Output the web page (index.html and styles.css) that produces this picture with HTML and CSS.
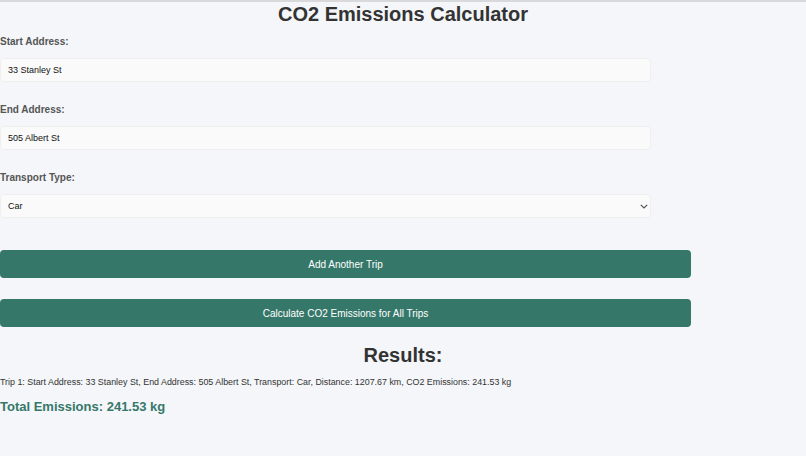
FILE: index.html
```html
<!DOCTYPE html>
<html>
<head>
<meta charset="utf-8">
<link rel="stylesheet" href="styles.css">
</head>
<body>
<h1 class="title">CO2 Emissions Calculator</h1>
<form class="form">
  <label class="label label-first">Start Address:</label>
  <input class="field" type="text" value="33 Stanley St">
  <label class="label">End Address:</label>
  <input class="field" type="text" value="505 Albert St">
  <label class="label">Transport Type:</label>
  <div class="select-wrap">
    <select class="field select">
      <option>Car</option>
    </select>
    <svg class="chevron" width="8" height="5" viewBox="0 0 8 5"><path d="M0.8 0.8 L4 4 L7.2 0.8" fill="none" stroke="#555" stroke-width="1.2"/></svg>
  </div>
  <button type="button" class="btn btn-first">Add Another Trip</button>
  <button type="button" class="btn btn-second">Calculate CO2 Emissions for All Trips</button>
</form>
<h2 class="results-title">Results:</h2>
<p class="trip">Trip 1: Start Address: 33 Stanley St, End Address: 505 Albert St, Transport: Car, Distance: 1207.67 km, CO2 Emissions: 241.53 kg</p>
<p class="total">Total Emissions: 241.53 kg</p>
</body>
</html>
```
FILE: styles.css
```css
html, body {
  margin: 0;
  padding: 0;
}
body {
  background: #f4f6f9;
  border-top: 2px solid #d9d9db;
  font-family: "Liberation Sans", Arial, sans-serif;
  color: #333;
  height: 454px;
  overflow: hidden;
}
.title {
  margin: 0;
  font-size: 20px;
  line-height: 24px;
  font-weight: bold;
  text-align: center;
  color: #333;
}
.form {
  display: flex;
  flex-direction: column;
  align-items: flex-start;
  margin: 0;
}
.label {
  display: block;
  font-size: 10px;
  line-height: 12px;
  font-weight: bold;
  color: #555;
  margin-top: 22px;
}
.label-first {
  margin-top: 10px;
}
.field {
  box-sizing: border-box;
  width: 651px;
  height: 24px;
  margin: 10px 0 0 0;
  padding: 0 0 0 7px;
  border: 1px solid #efefef;
  border-radius: 4px;
  background: #fafafa;
  font-family: "Liberation Sans", Arial, sans-serif;
  font-size: 9px;
  color: #111;
  outline: none;
}
.select-wrap {
  position: relative;
  margin-top: 10px;
}
.select {
  margin: 0;
  display: block;
  appearance: none;
  -webkit-appearance: none;
}
.chevron {
  position: absolute;
  right: 3px;
  top: 10px;
}
.btn {
  box-sizing: border-box;
  width: 691px;
  height: 28px;
  border: none;
  border-radius: 4px;
  background: #35786a;
  color: #fff;
  font-family: "Liberation Sans", Arial, sans-serif;
  font-size: 10px;
  padding: 0;
}
.btn-first {
  margin-top: 32px;
}
.btn-second {
  margin-top: 21px;
}
.results-title {
  margin: 16px 0 0 0;
  font-size: 20px;
  line-height: 24px;
  font-weight: bold;
  text-align: center;
  color: #333;
}
.trip {
  margin: 9px 0 0 0;
  font-size: 8.9px;
  line-height: 12px;
  color: #333;
}
.total {
  margin: 11px 0 0 0;
  font-size: 13px;
  line-height: 16px;
  font-weight: bold;
  color: #35786a;
}
```
